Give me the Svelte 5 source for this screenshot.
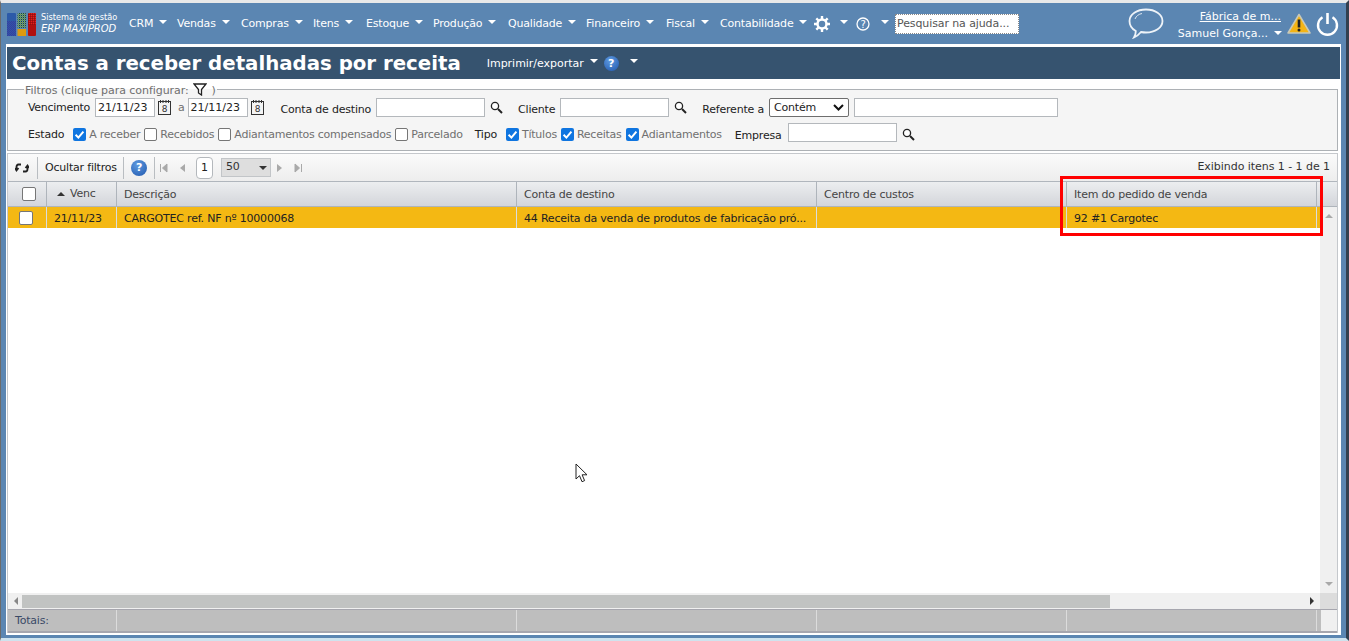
<script>
  const menu = [
    { name: 'CRM', w: 48 }, { name: 'Vendas', w: 64 }, { name: 'Compras', w: 72 },
    { name: 'Itens', w: 53 }, { name: 'Estoque', w: 67 }, { name: 'Produção', w: 75 },
    { name: 'Qualidade', w: 78 }, { name: 'Financeiro', w: 80 }, { name: 'Fiscal', w: 54 },
    { name: 'Contabilidade', w: 94 }
  ];
  const columns = [
    { name: 'Descrição', cls: 'c3' },
    { name: 'Conta de destino', cls: 'c4' },
    { name: 'Centro de custos', cls: 'c5' },
    { name: 'Item do pedido de venda', cls: 'c6' }
  ];
</script>

{#snippet caret()}<i class="caret"></i>{/snippet}
{#snippet search()}
  <svg class="mag" width="13" height="13" viewBox="0 0 13 13"><circle cx="5" cy="5" r="3.6" fill="#fff" stroke="#222" stroke-width="1.3"/><path d="M8 8l4 4" stroke="#222" stroke-width="2"/></svg>
{/snippet}
{#snippet cal()}
  <svg class="cal" width="13" height="15" viewBox="0 0 13 15"><rect x=".5" y="1.5" width="12" height="13" fill="#f4f4f4" stroke="#333"/><path d="M2.500 0v3M5 0v3M8 0v3M10.500 0v3" stroke="#333"/><text x="6.500" y="12" text-anchor="middle" font-size="9" fill="#333" font-family="DejaVu Sans">8</text></svg>
{/snippet}
{#snippet check(on)}
  {#if on}
    <span class="cb on"><svg width="13" height="13" viewBox="0 0 13 13"><path d="M2.600 6.800l2.800 2.800 5-6" fill="none" stroke="#fff" stroke-width="2"/></svg></span>
  {:else}
    <span class="cb"></span>
  {/if}
{/snippet}

<div class="page">
  <header class="top">
    <div class="brand">
      <svg width="30" height="23" viewBox="0 0 30 23">
        <defs>
          <pattern id="dotsB" width="2" height="2" patternUnits="userSpaceOnUse"><rect width="1" height="1" fill="#3a3aa0"/><rect x="1" y="1" width="1" height="1" fill="#3a3aa0"/></pattern>
          <pattern id="dotsG" width="2" height="2" patternUnits="userSpaceOnUse"><rect width="1" height="1" fill="#2a5a1a"/><rect x="1" y="1" width="1" height="1" fill="#7aa52a"/></pattern>
          <pattern id="dotsR" width="2" height="2" patternUnits="userSpaceOnUse"><rect width="1" height="1" fill="#e02020"/><rect x="1" y="1" width="1" height="1" fill="#901010"/></pattern>
        </defs>
        <rect x="0" y="0" width="9" height="23" rx="1" fill="#2c5aa8"/><rect x="0" y="8" width="9" height="15" fill="url(#dotsB)"/>
        <rect x="10.500" y="0" width="8.500" height="15" rx="1" fill="url(#dotsG)"/><rect x="10.500" y="16" width="8.500" height="7" fill="#dd9a10"/>
        <rect x="21" y="0" width="8" height="23" rx="1" fill="#b01010"/><rect x="21" y="0" width="8" height="12" fill="url(#dotsR)"/>
      </svg>
      <div class="brandtext"><span>Sistema de gestão</span><em>ERP MAXIPROD</em></div>
    </div>
    <nav class="menu">
      {#each menu as m}<span class="mi" style="width:{m.w}px">{m.name}{@render caret()}</span>{/each}
      <svg class="gear" width="16" height="16" viewBox="0 0 16 16"><circle cx="8" cy="8" r="4.500" fill="none" stroke="#fff" stroke-width="2.500"/><path d="M8 0v3M8 13v3M0 8h3M13 8h3M2.300 2.300l2.200 2.200M11.500 11.500l2.200 2.200M13.700 2.300l-2.200 2.200M4.500 11.500l-2.200 2.200" stroke="#fff" stroke-width="2.400"/></svg>
      <span class="c-a">{@render caret()}</span>
      <svg class="help" width="14" height="14" viewBox="0 0 14 14"><circle cx="7" cy="7" r="6" fill="none" stroke="#fff" stroke-width="1.300"/><text x="7" y="10.500" text-anchor="middle" fill="#fff" font-size="10" font-family="DejaVu Sans">?</text></svg>
      <span class="c-b">{@render caret()}</span>
    </nav>
    <div class="topsearch">Pesquisar na ajuda...</div>
    <svg class="chat" width="36" height="31" viewBox="0 0 36 31"><path d="M18 1.500c9 0 16.500 4.800 16.500 11.500S27 24.500 18 24.500c-2 0-3.500-.2-5-.5-2 2.500-4.500 4.500-7 5.500 1.200-2 1.800-4.200 1.800-6.500C4 21 1.500 17.500 1.500 13 1.500 6.300 9 1.500 18 1.500z" fill="none" stroke="#eef3f8" stroke-width="1.800"/><path d="M7 11c1-3 4-5 7-5.500" fill="none" stroke="#dbe6f0" stroke-width="1"/></svg>
    <div class="user">
      <a class="company" href="#top">Fábrica de m...</a>
      <span class="uname">Samuel Gonça...{@render caret()}</span>
    </div>
    <svg class="warn" width="24" height="21" viewBox="0 0 24 21"><path d="M12 1.500L23 20H1z" fill="#f3b415" stroke="#c9c9b8" stroke-width="1.500" stroke-linejoin="round"/><path d="M12 6.500v8" stroke="#222" stroke-width="2.600"/><circle cx="12" cy="17" r="1.500" fill="#222"/></svg>
    <svg class="power" width="23" height="24" viewBox="0 0 23 24"><path d="M6.500 5.200a9.500 9.500 0 1 0 10 0" fill="none" stroke="#fff" stroke-width="2.400"/><path d="M11.500 1v11" stroke="#fff" stroke-width="2.600"/></svg>
  </header>

  <main class="sheet">
    <div class="title">
      <h1>Contas a receber detalhadas por receita</h1>
      <span class="print">Imprimir/exportar{@render caret()}</span>
      <span class="qmark">?</span>
      {@render caret()}
    </div>

    <fieldset class="filters">
      <legend>Filtros (clique para configurar:
        <svg class="funnel" width="14" height="13" viewBox="0 0 14 13"><path d="M1 1h12L8.500 6.500V12L5.500 10V6.500z" fill="#fff" stroke="#222" stroke-width="1.300"/></svg> )</legend>
      <div class="frow r1">
        <span class="dark venc">Vencimento</span>
        <span class="inp date">21/11/23</span>{@render cal()}
        <span class="muted a">a</span>
        <span class="inp date">21/11/23</span>{@render cal()}
        <span class="dark l2 low">Conta de destino</span><span class="inp w109"></span>{@render search()}
        <span class="dark l3 low">Cliente</span><span class="inp w109"></span>{@render search()}
        <span class="dark l3 low">Referente a</span>
        <span class="select">Contém<svg width="11" height="7" viewBox="0 0 11 7"><path d="M1 1l4.500 4.500L10 1" fill="none" stroke="#111" stroke-width="2"/></svg></span>
        <span class="inp w204"></span>
      </div>
      <div class="frow r2">
        <span class="dark">Estado</span>
        <span class="cbs first">{@render check(true)}<span class="muted">A receber</span></span>
        <span class="cbs">{@render check(false)}<span class="muted">Recebidos</span></span>
        <span class="cbs">{@render check(false)}<span class="muted">Adiantamentos compensados</span></span>
        <span class="cbs">{@render check(false)}<span class="muted">Parcelado</span></span>
        <span class="dark tipo">Tipo</span>
        <span class="cbs first">{@render check(true)}<span class="muted">Títulos</span></span>
        <span class="cbs">{@render check(true)}<span class="muted">Receitas</span></span>
        <span class="cbs">{@render check(true)}<span class="muted">Adiantamentos</span></span>
        <span class="dark emp">Empresa</span><span class="inp w109 raised"></span>{@render search()}
      </div>
    </fieldset>

    <section class="grid">
      <div class="toolbar">
        <svg class="refresh" width="14" height="12" viewBox="0 0 14 12"><path d="M6 2.500H3.500C2 2.500 1.500 3.500 1.500 5v3M0 6l1.500 2.500L3.500 6M8 9.500h2.500c1.500 0 2-1 2-2.500V3.500M10.500 6l2-2.500L14 6" fill="none" stroke="#222" stroke-width="1.800"/></svg>
        <span class="tsep"></span>
        <span class="hide">Ocultar filtros</span>
        <span class="tsep"></span>
        <span class="qmark big">?</span>
        <span class="tsep"></span>
        <svg class="pg" width="10" height="10" viewBox="0 0 10 10"><path d="M1.500 1v8M8 1v8L3.500 5z" stroke="#a9a9a9" fill="#a9a9a9"/></svg>
        <svg class="pg" width="10" height="10" viewBox="0 0 10 10"><path d="M8 1v8L3 5z" fill="#a9a9a9"/></svg>
        <span class="pageno">1</span>
        <span class="pagesize">50<i class="caret dk"></i></span>
        <svg class="pg" width="10" height="10" viewBox="0 0 10 10"><path d="M2 1v8l5-4z" fill="#a9a9a9"/></svg>
        <svg class="pg" width="10" height="10" viewBox="0 0 10 10"><path d="M8.500 1v8M2 1v8l4.500-4z" stroke="#a9a9a9" fill="#a9a9a9"/></svg>
        <span class="count">Exibindo itens 1 - 1 de 1</span>
      </div>

      <div class="thead">
        <div class="th c1"><span class="cb big"></span></div>
        <div class="th c2"><i class="sort"></i>Venc</div>
        {#each columns as col}<div class="th {col.cls}">{col.name}</div>{/each}
        <div class="th cfill"></div>
      </div>

      <div class="tbody">
        <div class="rows">
          <div class="tr">
            <div class="td c1"><span class="cb big"></span></div>
            <div class="td c2">21/11/23</div>
            <div class="td c3">CARGOTEC ref. NF nº 10000068</div>
            <div class="td c4">44 Receita da venda de produtos de fabricação pró...</div>
            <div class="td c5"></div>
            <div class="td c6">92 #1 Cargotec</div>
          </div>
        </div>
        <div class="vscroll">
          <i class="up"></i>
          <i class="down"></i>
        </div>
      </div>

      <div class="hscroll">
        <i class="left"></i>
        <div class="thumb"></div>
        <i class="right"></i>
        <div class="corner"></div>
      </div>

      <div class="totals">
        <div class="tt c1x">Totais:</div>
        <div class="tt c3"></div>
        <div class="tt c4"></div>
        <div class="tt c5"></div>
        <div class="tt c6"></div>
        <div class="tcorner"></div>
      </div>
    </section>

    <div class="redbox"></div>
    <svg class="cursor" width="13" height="20" viewBox="0 0 13 20"><path d="M1 1v15l3.500-3.300 2.500 6 2.600-1.100-2.500-5.800h4.900z" fill="#fff" stroke="#222" stroke-width="1"/></svg>
  </main>
</div>

<style>
  :global(body) { margin: 0; background: #5b86b2; overflow: hidden; }
  :global(html) { background: #5b86b2; }

  .page {
    width: 1349px; height: 641px; overflow: hidden; position: relative;
    font-family: "DejaVu Sans", sans-serif; font-size: 11px; color: #222; letter-spacing: -0.2px;
    background: #5b86b2; display: flex; flex-direction: column;
    box-sizing: border-box; border-top: 3px solid #e9e9e9;
    border-right: 3px solid #33404f; border-left: 1px solid #6b6b6b; border-bottom: 3px solid #cfe3ee;
  }
  .top { height: 41px; display: flex; align-items: center; flex: none; color: #fff; }
  .top svg { flex: none; }
  .brand { display: flex; align-items: center; margin-left: 6px; width: 122px; flex: none; }
  .brand svg { margin-top: 1px; }
  .brandtext { display: flex; flex-direction: column; margin-left: 4px; margin-top: -1px; color: #fff; line-height: 12px; white-space: nowrap; letter-spacing: 0; }
  .brandtext span { font-size: 8.200px; }
  .brandtext em { font-size: 10px; letter-spacing: -0.1px; }
  .menu { display: flex; align-items: center; flex: none; }
  .mi { display: inline-flex; align-items: center; white-space: nowrap; flex: none; }
  .caret { display: inline-block; width: 0; height: 0; border: 4px solid transparent; border-top: 4px solid #fff; border-bottom: 0; margin-left: 6px; position: relative; top: -2px; }
  .c-a { margin-left: 4px; display: inline-flex; }
  .help { margin-left: 8px; }
  .c-b { margin-left: 5px; display: inline-flex; }
  .topsearch { width: 121px; height: 18px; margin-left: 6px; background: #fff; border: 1px dotted #888; color: #555; line-height: 18px; padding-left: 1px; white-space: nowrap; overflow: hidden; flex: none; letter-spacing: -0.1px; }
  .chat { margin-left: 109px; }
  .user { width: 104px; margin-left: 13px; margin-top: 2px; display: flex; flex-direction: column; align-items: flex-end; line-height: 17px; letter-spacing: 0; flex: none; }
  .company { color: #fff; text-decoration: underline; }
  .uname { white-space: nowrap; margin-right: -1px; }
  .warn { margin-left: 6px; }
  .power { margin-left: 5px; }

  .sheet { flex: 1; margin: 0 5px 3px 5px; background: #fff; border: 1px solid #fff; padding: 2px 0 1px 0; display: flex; flex-direction: column; position: relative; min-height: 0; box-sizing: border-box; }
  .title { height: 32px; background: #36536f; display: flex; align-items: center; color: #fff; flex: none; padding-left: 5px; }
  .title h1 { margin: 0; font-size: 19.750px; font-weight: 700; color: #fff; white-space: nowrap; letter-spacing: 0; }
  .print { margin-left: 26px; display: inline-flex; align-items: center; letter-spacing: -0.03px; }
  .qmark { display: inline-block; width: 15px; height: 15px; border-radius: 50%; background: radial-gradient(circle at 40% 30%, #5f9be0, #1f56ad); color: #fff; text-align: center; font: bold 11px/15px "DejaVu Sans", sans-serif; margin-left: 6px; flex: none; }
  .title .caret { margin-left: 11px; }
  .title .print .caret { margin-left: 6px; }

  .filters { margin: 4px 2px 0 0; height: 68px; box-sizing: border-box; border: 1px solid #adb1b5; background: #f5f5f5; padding: 0 0 0 20px; min-width: 0; flex: none; position: relative; }
  .filters legend { color: #6f6f6f; padding: 0 1px; margin-left: -4px; height: 13px; line-height: 11px; white-space: nowrap; letter-spacing: -0.05px; }
  .funnel { vertical-align: -2px; margin: 0 1px 0 1px; }
  .frow { display: flex; align-items: center; white-space: nowrap; position: absolute; left: 20px; }
  .r1 { top: 2px; height: 19px; }
  .r2 { top: 28px; height: 20px; }
  .dark { color: #222; }
  .venc { letter-spacing: -0.3px; }
  .muted { color: #707070; letter-spacing: -0.24px; }
  .low { position: relative; top: 2px; }
  .inp { display: inline-block; height: 19px; box-sizing: border-box; background: #fff; border: 1px solid #b4b8bc; line-height: 17px; padding-left: 2px; color: #222; flex: none; letter-spacing: 0; }
  .date { width: 60px; margin-left: 5px; }
  .cal { margin-left: 3px; flex: none; }
  .a { margin-left: 7px; margin-right: -2px; }
  .l2 { margin-left: 17px; margin-right: 5px; }
  .l3 { margin-left: 15px; margin-right: 5px; }
  .w109 { width: 109px; }
  .w204 { width: 204px; margin-left: 5px; }
  .raised { position: relative; top: -2px; }
  .mag { margin-left: 5px; flex: none; }
  .select { width: 80px; height: 19px; box-sizing: border-box; background: #fff; border: 1px solid #6e6e6e; border-radius: 2px; display: inline-flex; align-items: center; justify-content: space-between; padding: 0 4px; flex: none; }
  .cb { display: inline-block; width: 13px; height: 13px; box-sizing: border-box; border: 1px solid #767676; border-radius: 2px; background: #fff; flex: none; }
  .cb.on { background: #0f75e0; border: 0; }
  .cb.on svg { display: block; }
  .cb.big { width: 14px; height: 14px; }
  .cbs { display: inline-flex; align-items: center; gap: 3px; margin-left: 4px; }
  .cbs.first { margin-left: 9px; }
  .tipo { margin-left: 12px; }
  .emp { margin-left: 13px; margin-right: 6px; position: relative; top: 1px; }

  .grid { margin: 2px 2px 0 0; flex: 1; min-height: 0; border: 1px solid #c5c8cc; border-width: 1px 1px 0 1px; display: flex; flex-direction: column; background: #fff; }
  .toolbar { height: 27px; display: flex; align-items: center; background: linear-gradient(#fbfbfb, #ededed); flex: none; }
  .refresh { margin-left: 7px; margin-right: 8px; flex: none; }
  .tsep { width: 1px; height: 22px; background: #b9bdc1; flex: none; }
  .hide { padding: 0 5px 0 7px; white-space: nowrap; color: #222; flex: none; width: 73px; }
  .qmark.big { width: 16px; height: 16px; line-height: 16px; margin: 0 7px; }
  .pg { margin: 0 1px 0 4px; flex: none; }
  .pg + .pg { margin-left: 7px; }
  .pageno { width: 17px; height: 22px; box-sizing: border-box; border: 1px solid #b4b8bc; border-radius: 4px; background: #fff; text-align: center; line-height: 20px; margin: 0 8px 0 8px; flex: none; }
  .pagesize { width: 50px; height: 19px; box-sizing: border-box; border: 1px solid #c2c5c8; background: #dedede; display: inline-flex; align-items: center; justify-content: space-between; padding: 0 3px 3px 4px; margin-right: 0; color: #333; flex: none; }
  .caret.dk { border-top-color: #333; top: 2px; }
  .count { margin-left: auto; margin-right: 7px; color: #333; white-space: nowrap; letter-spacing: -0.05px; position: relative; top: -1px; }

  .thead { height: 26px; display: flex; flex: none; background: linear-gradient(#eceef0, #d3d5da); border-top: 1px solid #b0b6bd; border-bottom: 1px solid #aeb4bb; box-sizing: border-box; }
  .th { box-sizing: border-box; padding-left: 7px; line-height: 26px; color: #444; border-right: 1px solid #aeb4bb; flex: none; white-space: nowrap; }
  .c1 { width: 39px; display: flex; align-items: center; justify-content: center; padding: 0; }
  .c2 { width: 70px; }
  .c3 { width: 400px; }
  .c4 { width: 300px; }
  .c5 { width: 250px; }
  .c6 { width: 250px; }
  .th.c1 { padding: 0 0 0 4px; }
  .th.c2 { padding-left: 10px; display: flex; align-items: center; }
  .sort { width: 0; height: 0; border: 4px solid transparent; border-bottom: 4px solid #333; border-top: 0; margin-right: 5px; }
  .cfill { flex: 1; border-right: 0; }

  .tbody { flex: 1; display: flex; min-height: 0; }
  .rows { flex: 1; min-width: 0; }
  .tr { display: flex; height: 21px; background: #f4b813; }
  .td { box-sizing: border-box; padding-left: 7px; line-height: 23px; color: #222; border-right: 1px solid #d9dde0; flex: none; white-space: nowrap; overflow: hidden; }
  .td.c1 { padding: 0 2px 0 0; }
  .vscroll { width: 17px; background: #f0f0f0; display: flex; flex-direction: column; justify-content: space-between; align-items: center; flex: none; padding: 7px 0; box-sizing: border-box; }
  .up { border: 4px solid transparent; border-bottom: 4px solid #a9a9a9; border-top: 0; }
  .down { border: 4px solid transparent; border-top: 4px solid #a9a9a9; border-bottom: 0; }

  .hscroll { height: 16px; background: #f0f0f0; display: flex; align-items: center; flex: none; }
  .left { border: 4px solid transparent; border-right: 4px solid #888; border-left: 0; margin-left: 6px; margin-right: 4px; }
  .thumb { width: 1088px; height: 13px; background: #c1c3c2; }
  .right { border: 4px solid transparent; border-left: 4px solid #333; border-right: 0; margin-left: auto; margin-right: 6px; }
  .corner { width: 17px; height: 16px; background: #dcdcdc; }

  .totals { height: 24px; display: flex; background: #bebebe; border-top: 1px solid #a6a6ae; border-bottom: 2px solid #a6a6ae; box-sizing: border-box; flex: none; }
  .tt { box-sizing: border-box; border-right: 1px solid #dcdcdc; padding-left: 7px; line-height: 22px; color: #3a4a66; white-space: nowrap; flex: none; }
  .c1x { width: 109px; }
  .tcorner { flex: 1; background: #f0f0f0; margin-left: 4px; }

  .redbox { position: absolute; left: 1053px; top: 131px; width: 263px; height: 60px; box-sizing: border-box; border: 3px solid #f00; pointer-events: none; }
  .cursor { position: absolute; left: 568px; top: 418px; }
</style>
